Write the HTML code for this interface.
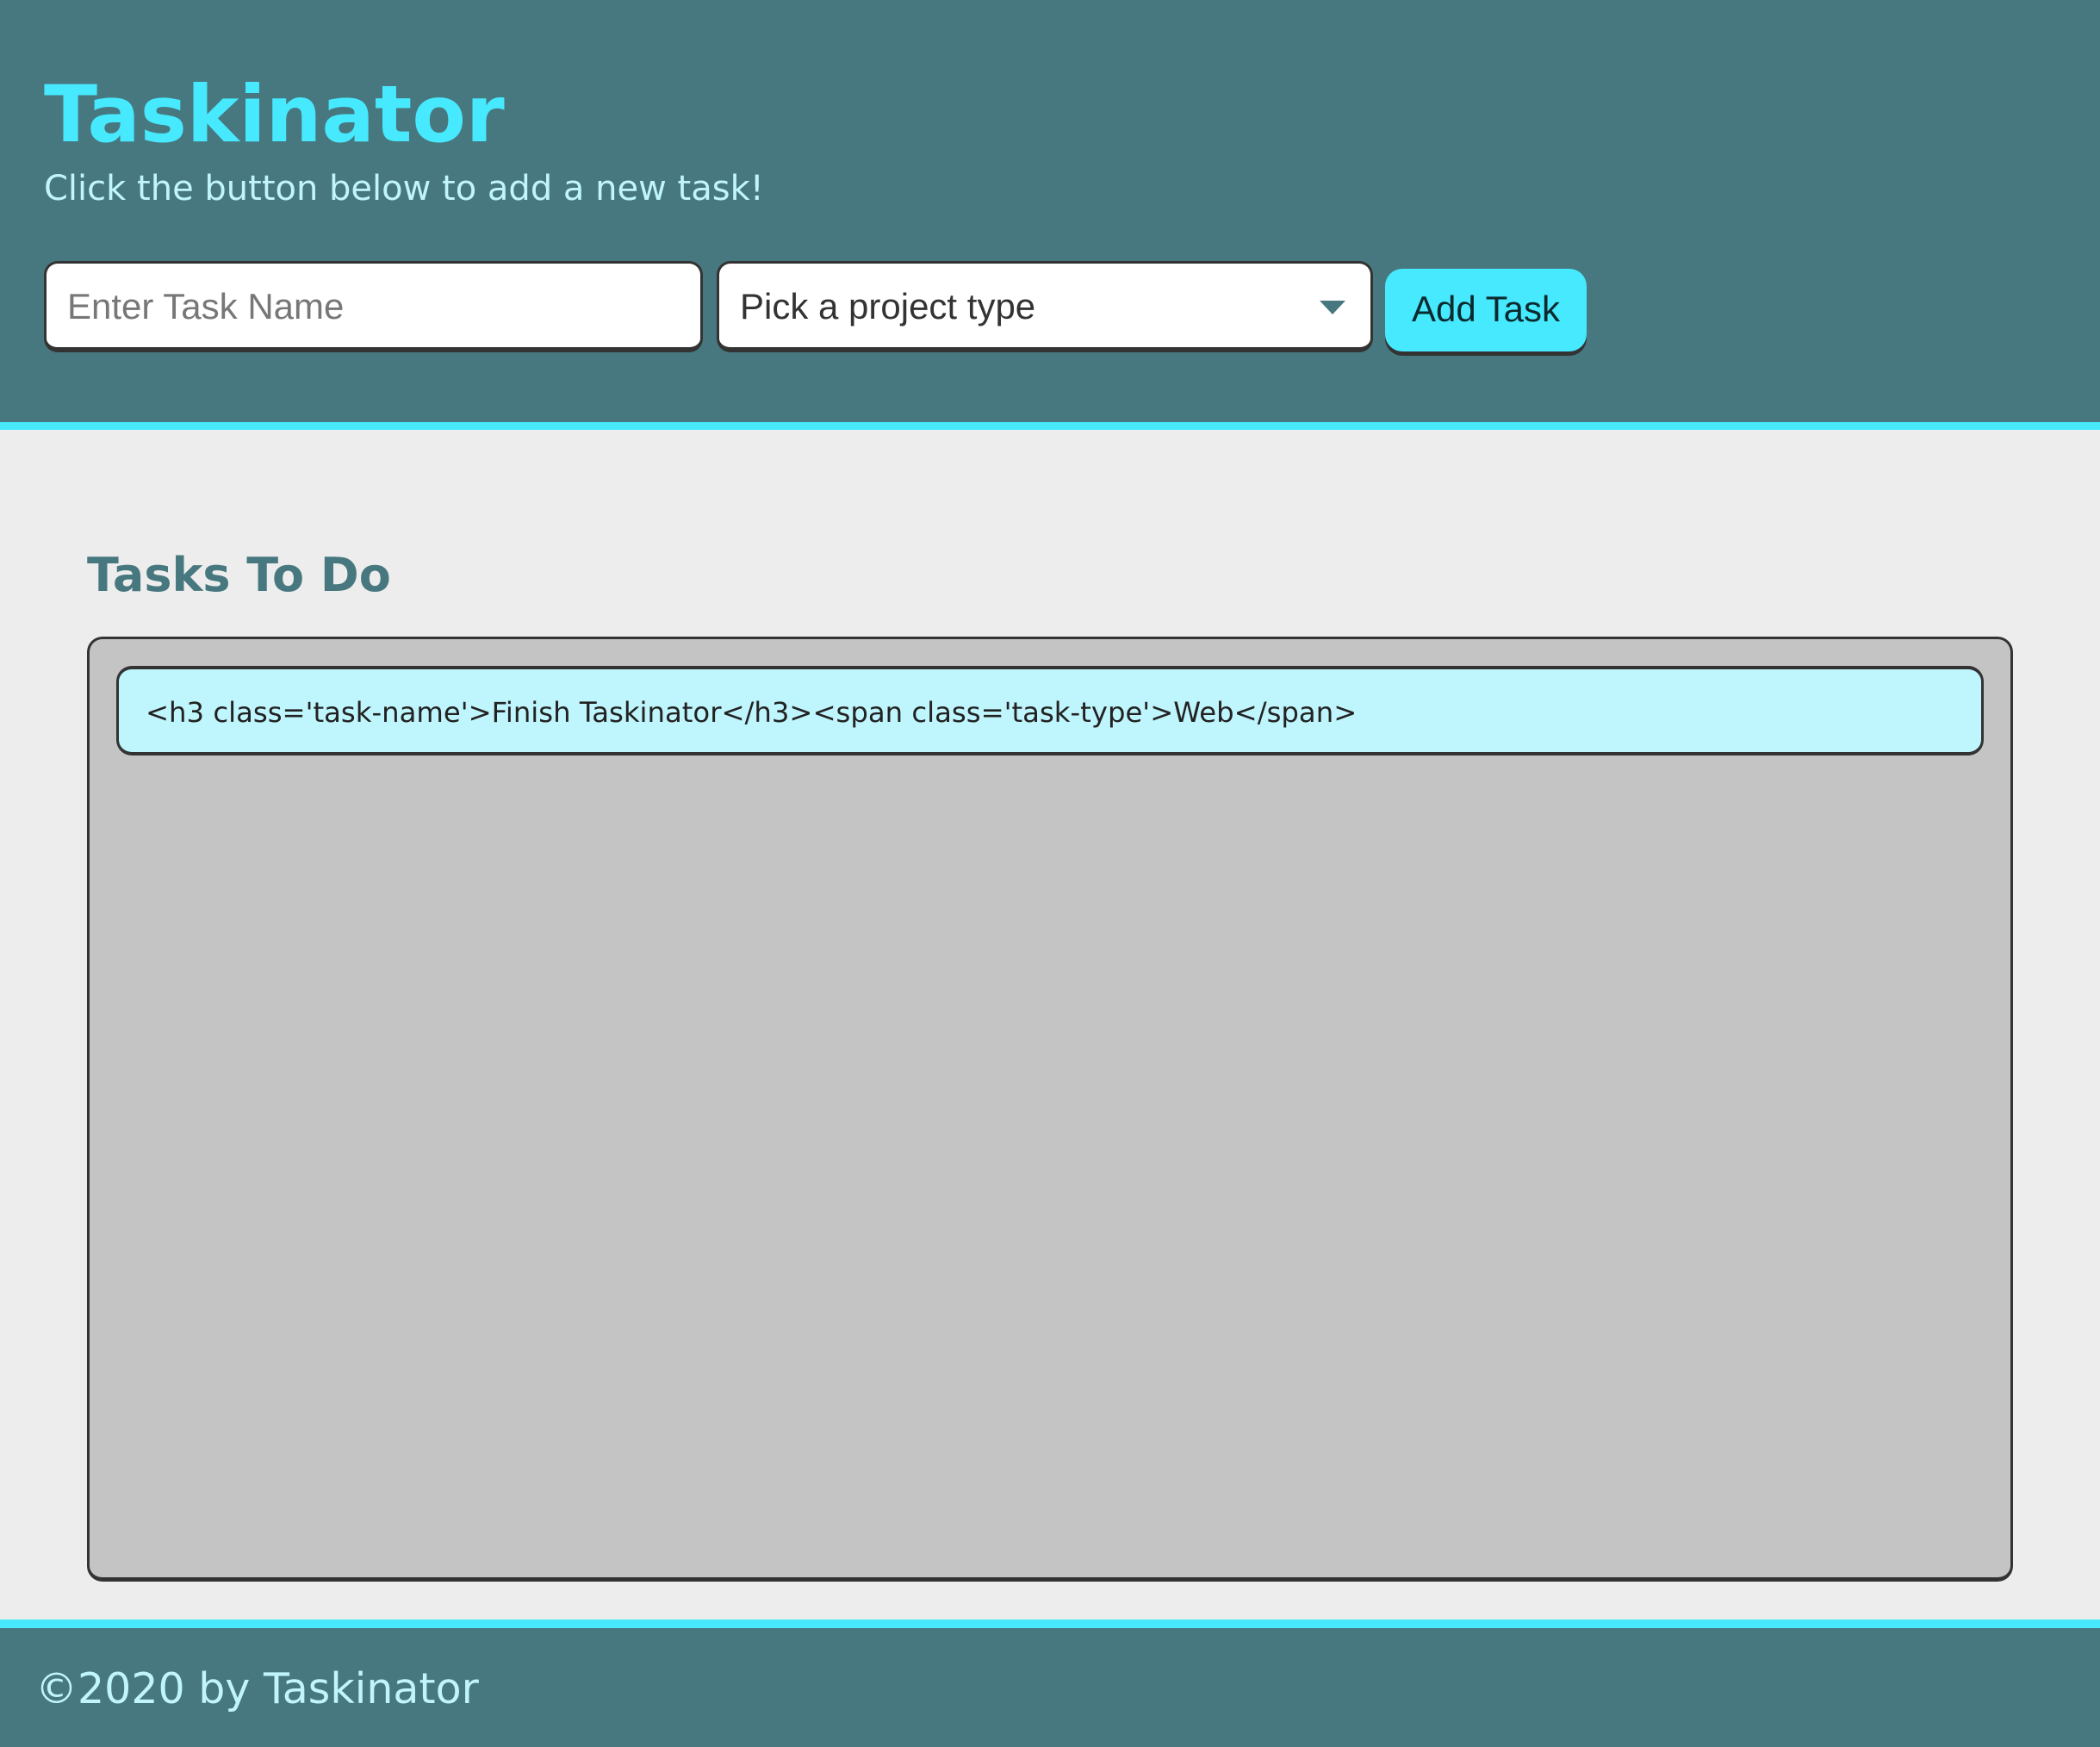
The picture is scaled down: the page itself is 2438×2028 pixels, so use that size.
<!DOCTYPE html>
<html><head><meta charset="utf-8"><style>
*{box-sizing:border-box;margin:0;padding:0}
body{width:2438px;height:2028px;background:#ededed;position:relative;overflow:hidden;font-family:"DejaVu Sans",Verdana,sans-serif}
.hdr{position:absolute;left:0;top:0;width:2438px;height:499px;background:#48787f;border-bottom:9px solid #46e9fe}
h1{position:absolute;left:51px;top:88px;font-size:91px;font-weight:bold;color:#46e9fe;line-height:1}
.sub{position:absolute;left:51px;top:199px;font-size:40px;color:#c0f5fc;line-height:1}
.inp{position:absolute;top:303px;height:106px;background:#fff;border:3px solid #333;border-bottom-width:6px;border-radius:16px;font-family:"Liberation Sans",Arial,sans-serif;font-size:42px;padding-left:24px;line-height:99px}
.btn{position:absolute;left:1608px;top:312px;width:234px;height:96px;background:#46e9fe;border-radius:20px;box-shadow:0 5px 0 #333;font-family:"Liberation Sans",Arial,sans-serif;font-size:42px;color:#0c2a2e;text-align:center;line-height:94px}
.arrow{position:absolute;left:1532px;top:349px;width:0;height:0;border-left:15px solid transparent;border-right:15px solid transparent;border-top:16px solid #48787f}
h2{position:absolute;left:101px;top:641px;font-size:54px;font-weight:bold;color:#48787f;line-height:1}
.box{position:absolute;left:101px;top:739px;width:2236px;height:1097px;background:#c4c4c4;border:3px solid #333;border-bottom-width:5px;border-radius:18px}
.task{position:absolute;left:135px;top:773px;width:2168px;height:104px;background:#bff5fc;border:3px solid #333;border-top-width:4px;border-bottom-width:4px;border-radius:18px;font-size:32.3px;color:#222;padding-left:31px;line-height:100px}
.ftr{position:absolute;left:0;top:1880px;width:2438px;height:148px;background:#48787f;border-top:10px solid #46e9fe}
.ftr span{position:absolute;left:41px;top:46px;font-size:49px;color:#c0f5fc;line-height:1}
</style></head><body>
<div class="hdr">
<h1>Taskinator</h1>
<div class="sub">Click the button below to add a new task!</div>
<div class="inp" style="left:51px;width:765px;color:#777">Enter Task Name</div>
<div class="inp" style="left:832px;width:762px;color:#333">Pick a project type</div>
<div class="arrow"></div>
<div class="btn">Add Task</div>
</div>
<h2>Tasks To Do</h2>
<div class="box"></div>
<div class="task">&lt;h3 class='task-name'&gt;Finish Taskinator&lt;/h3&gt;&lt;span class='task-type'&gt;Web&lt;/span&gt;</div>
<div class="ftr"><span>©2020 by Taskinator</span></div>
</body></html>
